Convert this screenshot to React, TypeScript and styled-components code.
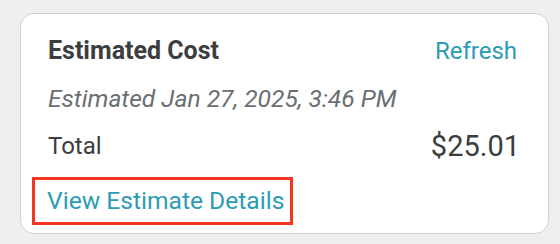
import styled, { createGlobalStyle } from "styled-components";

const GlobalStyle = createGlobalStyle`
  html, body {
    margin: 0;
    padding: 0;
    background: #efefef;
  }
  body {
    font-family: Roboto, "Liberation Sans", sans-serif;
  }
`;

const Page = styled.div`
  padding: 13px 11px 10px 20px;
`;

const Card = styled.div`
  width: 529px;
  box-sizing: border-box;
  background: #ffffff;
  border: 1px solid #d2d2d2;
  border-radius: 14px;
  padding: 22.5px 31px 8px 27px;
  display: flex;
  flex-direction: column;
`;

const Row = styled.div`
  display: flex;
  justify-content: space-between;
  align-items: baseline;
`;

const Title = styled.h2`
  margin: 0;
  font-size: 25px;
  line-height: 28px;
  font-weight: 700;
  color: #3b3d3e;
`;

const LinkButton = styled.button<{ $size?: number }>`
  border: none;
  background: none;
  padding: 0;
  font-family: inherit;
  font-size: ${(p) => p.$size ?? 24}px;
  line-height: 28px;
  color: #2c9cb6;
  cursor: pointer;
`;

const Timestamp = styled.div`
  margin-top: 20px;
  font-size: 24.6px;
  line-height: 28px;
  font-style: italic;
  color: #6a6f72;
`;

const TotalRow = styled(Row)`
  margin-top: 16px;
  align-items: center;
  height: 34px;
`;

const Label = styled.span`
  font-size: 24px;
  line-height: 28px;
  color: #3b3d3e;
`;

const Amount = styled.span`
  font-size: 29px;
  line-height: 34px;
  margin-right: -3px;
  color: #3b3d3e;
`;

const Highlight = styled.div`
  align-self: flex-start;
  margin: 14px 0 0 -16px;
  border: 3px solid #f2361f;
  padding: 7px 6px 7px 12px;
`;

export default function App() {
  return (
    <Page>
      <GlobalStyle />
      <Card>
        <Row>
          <Title>Estimated Cost</Title>
          <LinkButton>Refresh</LinkButton>
        </Row>
        <Timestamp>Estimated Jan 27, 2025, 3:46 PM</Timestamp>
        <TotalRow>
          <Label>Total</Label>
          <Amount>$25.01</Amount>
        </TotalRow>
        <Highlight>
          <LinkButton $size={24.6}>View Estimate Details</LinkButton>
        </Highlight>
      </Card>
    </Page>
  );
}
